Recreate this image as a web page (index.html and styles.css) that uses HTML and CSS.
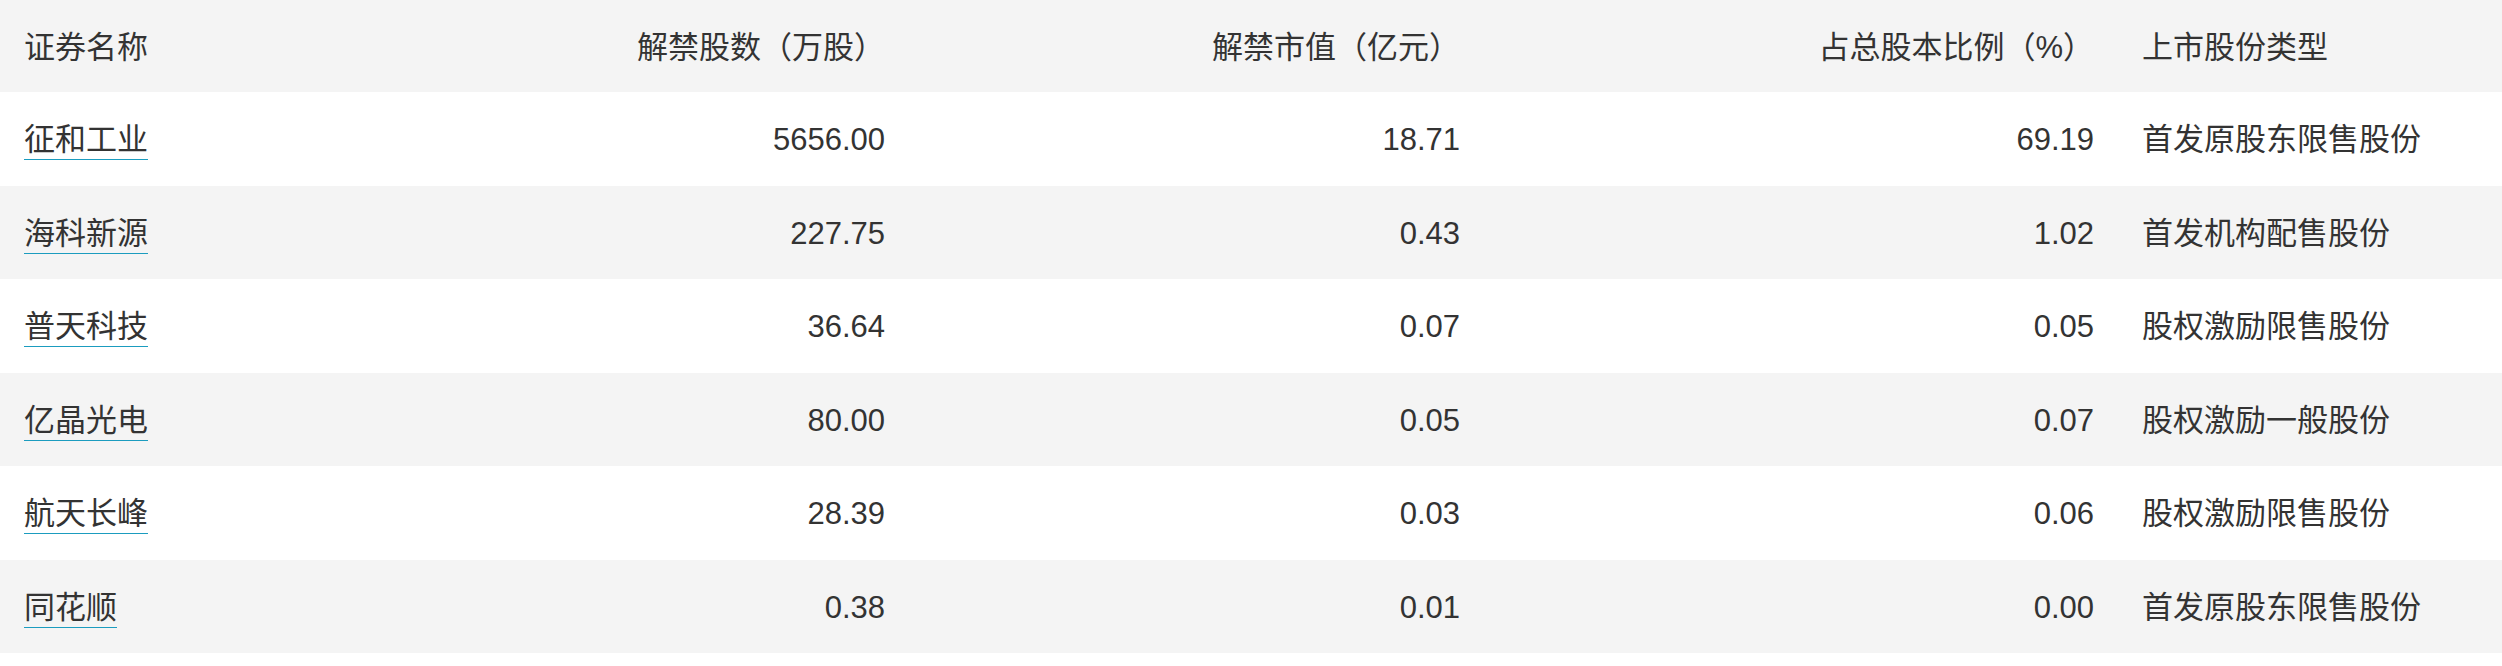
FILE: index.html
```html
<!DOCTYPE html>
<html lang="zh-CN">
<head>
<meta charset="utf-8">
<link rel="stylesheet" href="styles.css">
</head>
<body>
<div class="table">
  <div class="row head">
    <div class="cell">证券名称</div>
    <div class="cell num">解禁股数（万股）</div>
    <div class="cell num">解禁市值（亿元）</div>
    <div class="cell num">占总股本比例（%）</div>
    <div class="cell">上市股份类型</div>
  </div>
  <div class="row">
    <div class="cell"><span class="link">征和工业</span></div>
    <div class="cell num">5656.00</div>
    <div class="cell num">18.71</div>
    <div class="cell num">69.19</div>
    <div class="cell">首发原股东限售股份</div>
  </div>
  <div class="row alt">
    <div class="cell"><span class="link">海科新源</span></div>
    <div class="cell num">227.75</div>
    <div class="cell num">0.43</div>
    <div class="cell num">1.02</div>
    <div class="cell">首发机构配售股份</div>
  </div>
  <div class="row">
    <div class="cell"><span class="link">普天科技</span></div>
    <div class="cell num">36.64</div>
    <div class="cell num">0.07</div>
    <div class="cell num">0.05</div>
    <div class="cell">股权激励限售股份</div>
  </div>
  <div class="row alt">
    <div class="cell"><span class="link">亿晶光电</span></div>
    <div class="cell num">80.00</div>
    <div class="cell num">0.05</div>
    <div class="cell num">0.07</div>
    <div class="cell">股权激励一般股份</div>
  </div>
  <div class="row">
    <div class="cell"><span class="link">航天长峰</span></div>
    <div class="cell num">28.39</div>
    <div class="cell num">0.03</div>
    <div class="cell num">0.06</div>
    <div class="cell">股权激励限售股份</div>
  </div>
  <div class="row alt">
    <div class="cell"><span class="link">同花顺</span></div>
    <div class="cell num">0.38</div>
    <div class="cell num">0.01</div>
    <div class="cell num">0.00</div>
    <div class="cell">首发原股东限售股份</div>
  </div>
</div>
</body>
</html>
```
FILE: styles.css
```css
html, body {
  margin: 0;
  padding: 0;
  background: #ffffff;
}
body {
  font-family: "Liberation Sans", "Noto Sans CJK SC", sans-serif;
  font-size: 31px;
  color: #333333;
}
.table {
  display: flex;
  flex-direction: column;
}
.row {
  display: grid;
  grid-template-columns: 400px 509px 575px 634px 1fr;
  height: 93.5px;
  align-items: center;
  background: #ffffff;
}
.row.head {
  height: 92px;
  background: #f4f4f4;
}
.row.alt {
  background: #f4f4f4;
}
.cell {
  padding: 3px 24px 0;
  white-space: nowrap;
  line-height: 36px;
}
.cell.num {
  text-align: right;
}
.link {
  text-decoration: underline;
  text-decoration-color: #1b9cbf;
  text-decoration-thickness: 1px;
  text-underline-offset: 9px;
}
```
